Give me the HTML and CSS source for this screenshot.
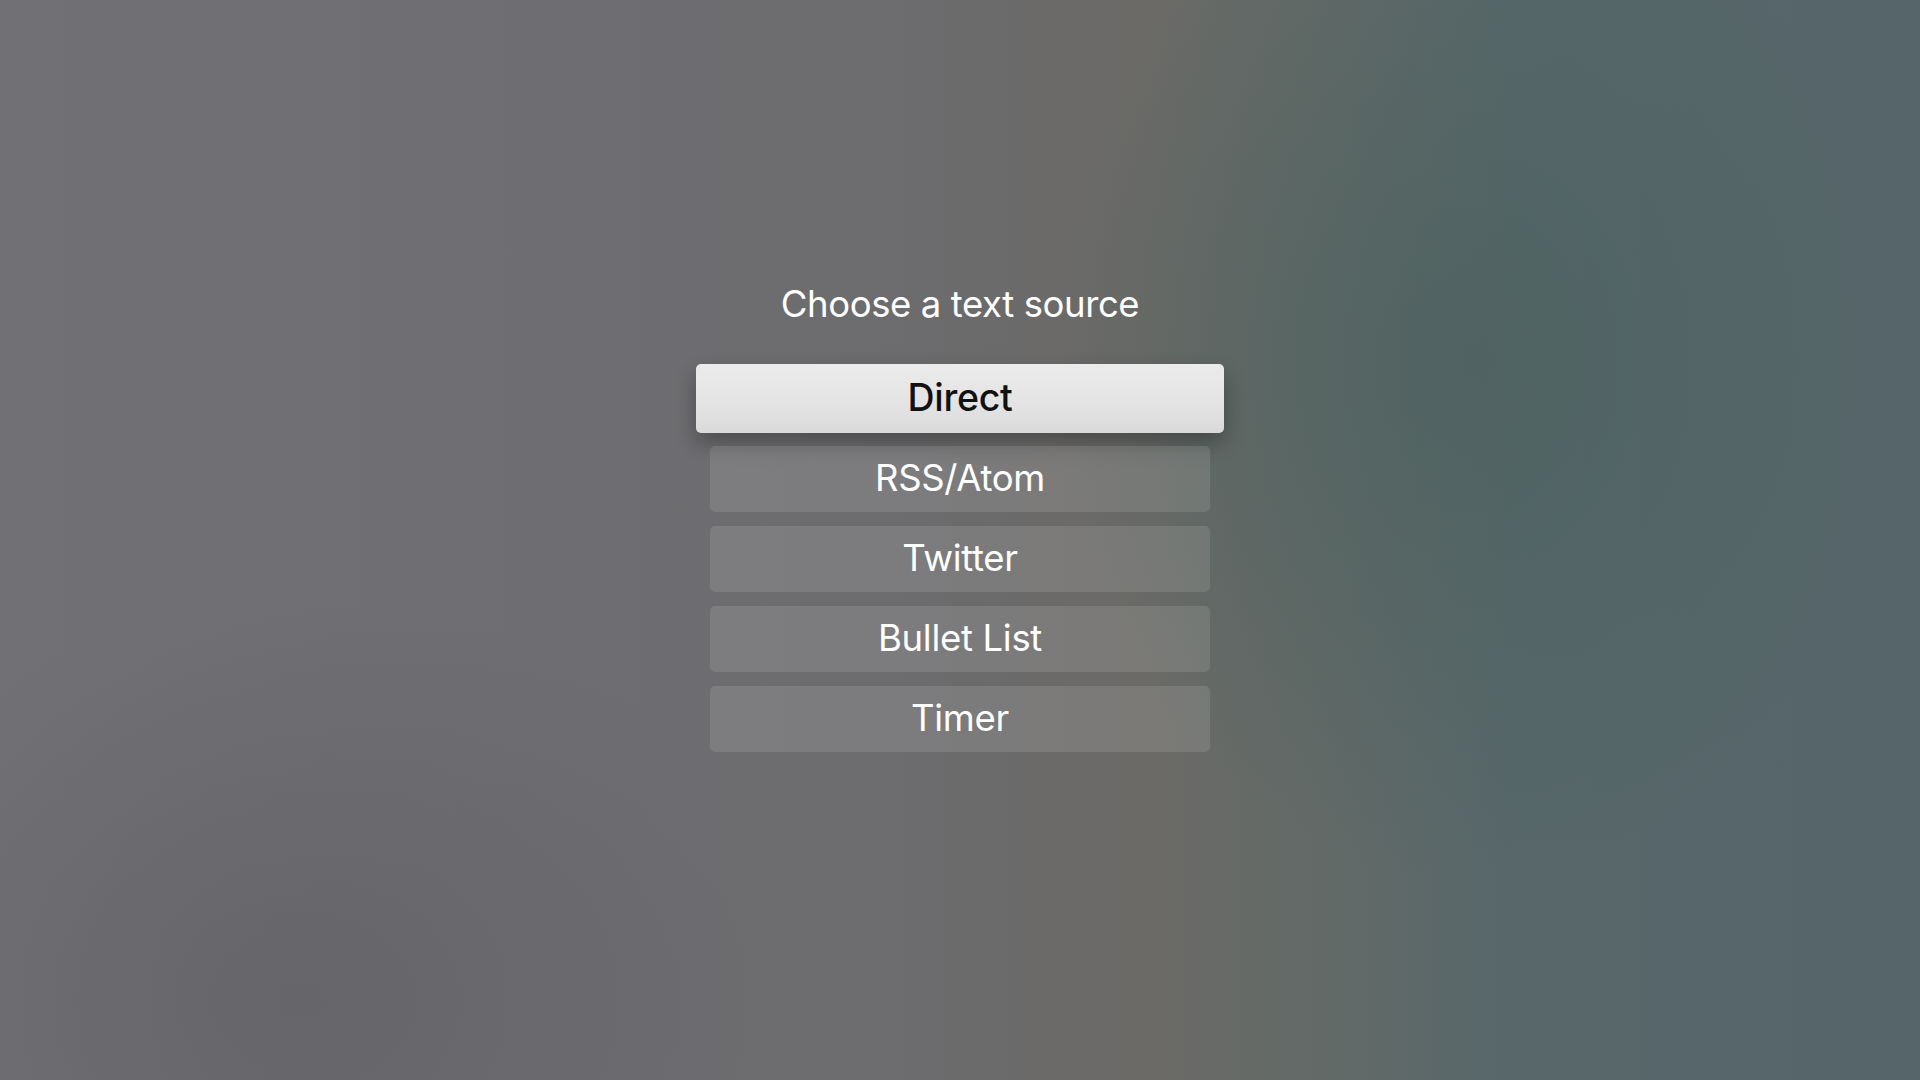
FILE: index.html
```html
<!DOCTYPE html>
<html lang="en">
<head>
  <meta charset="UTF-8">
  <meta name="viewport" content="width=device-width, initial-scale=1.0">
  <title>Choose a text source</title>
  <link rel="stylesheet" href="styles.css">
</head>
<body>
  <div class="screen">
    <h1 class="title">Choose a text source</h1>
    <div class="menu">
      <button class="item focused">Direct</button>
      <button class="item">RSS/Atom</button>
      <button class="item">Twitter</button>
      <button class="item">Bullet List</button>
      <button class="item">Timer</button>
    </div>
  </div>
</body>
</html>
```

FILE: styles.css
```css
html, body {
  margin: 0;
  padding: 0;
  height: 100%;
}
body {
  font-family: Inter, "Noto Sans", sans-serif;
  color: #fff;
  background-color: #6e6d70;
  background-image:
    radial-gradient(ellipse 420px 520px at 1470px 360px, rgba(78, 98, 96, 0.85), rgba(78, 98, 96, 0) 100%),
    radial-gradient(ellipse 500px 400px at 300px 1000px, rgba(95, 94, 98, 0.6), rgba(95, 94, 98, 0) 100%),
    linear-gradient(90deg, #717074 0%, #6e6d71 30%, #6c6b6d 48%, #6b6a67 60%, #636a67 68%, #57676a 79%, #55656a 100%);
  overflow: hidden;
}
.screen {
  height: 100%;
  display: flex;
  flex-direction: column;
  align-items: center;
  padding-top: 280px;
  box-sizing: border-box;
}
.title {
  margin: 0;
  font-size: 36.5px;
  font-weight: 400;
  line-height: 48px;
  letter-spacing: -0.4px;
}
.menu {
  margin-top: 36px;
  display: flex;
  flex-direction: column;
  align-items: center;
  gap: 14px;
}
.item {
  width: 500px;
  height: 66px;
  border: none;
  border-radius: 5px;
  background: rgba(255, 255, 255, 0.11);
  color: #fff;
  font-family: Inter, "Noto Sans", sans-serif;
  font-size: 36.5px;
  font-weight: 400;
  letter-spacing: -0.3px;
  padding: 0 0 3px;
}
.item.focused {
  width: 528px;
  height: 69px;
  margin-bottom: -1px;
  background: linear-gradient(180deg, #ebebeb 0%, #e3e3e3 60%, #dadada 100%);
  color: #111;
  font-weight: 500;
  font-size: 37.5px;
  box-shadow: 0 10px 22px rgba(0, 0, 0, 0.3);
}
```
